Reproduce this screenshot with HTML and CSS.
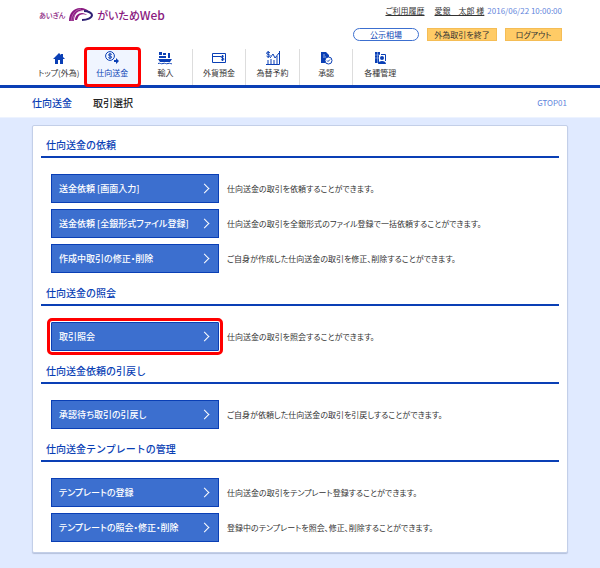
FILE: index.html
```html
<!doctype html>
<html lang="ja">
<head>
<title>仕向送金 取引選択 | あいぎん がいためWeb</title>
<meta charset="UTF-8">
<meta name="viewport" content="width=device-width, initial-scale=1.0">
<link rel="stylesheet" href="styles.css">
</head>
<body>
<header class="top">
<div class="logo">
<span class="bank">あいぎん</span>
<svg viewBox="0 0 24 14" width="24" height="14">
<path d="M0 13C0 5 5 0 11 0c5 0 8 2 9 4-3-2-6-2-9-1C7 4 5 8 5 13z" fill="#8a1a80"/>
<path d="M2 13C3 6 6 2 12 1M4 13C4 7 8 3 14 3" fill="none" stroke="#d9a3d3" stroke-width=".5"/>
<path d="M6 12c0-4 3-7 7-7 2 0 4 1 5 2-3-1-5-1-7 0-2 1-2 3-3 5z" fill="#8a1a80"/>
<path d="M15 3c4 0 8 2 8 4 0 3-5 5-10 5" fill="none" stroke="#2d1f73" stroke-width="2"/>
</svg>
<span class="service">がいため<span class="web">Web</span></span>
</div>
<div class="user">
<p class="info"><a href="#">ご利用履歴</a><a href="#">愛銀　太郎 様</a><time>2016/06/22 10:00:00</time></p>
<div class="actions">
<button type="button" class="rate">公示相場</button>
<button type="button" class="exit">外為取引を終了</button>
<button type="button" class="logout">ログアウト</button>
</div>
</div>
</header>

<nav>
<div class="menu">
<a href="#"><svg viewBox="0 0 14 14"><path d="M7 2L1 8h2v5h3V9h2v4h3V8h2l-2-2V3H9v1z" fill="#0a3fb5"/></svg>トップ(外為)</a>
<a href="#" class="current"><svg viewBox="0 0 14 14"><circle cx="5" cy="5" r="4.400" fill="none" stroke="#0a3fb5"/><path d="M6.800 3.500C6 2.600 3.500 2.700 3.500 4c0 1.400 3.200.7 3.200 2.100 0 1.300-2.500 1.400-3.400.4M5 2v6" fill="none" stroke="#0a3fb5"/><path d="M9 9h2V7l3 3-3 3v-2H9z" fill="#0a3fb5"/></svg>仕向送金</a>
<a href="#"><svg viewBox="0 0 14 14"><path d="M1 1h3v3H1zM5 2h3v2H5zM1 5h7v2H1zM10 2h2v5h-2zM0 8h14l-2 3H2z" fill="#0a3fb5"/><path d="M0 12.500c2-1 3 1 5 0s3 1 5 0 3 1 4 0" fill="none" stroke="#0a3fb5"/></svg>輸入</a>
<a href="#"><svg viewBox="0 0 14 14"><path d="M.5 2.500h13v9H.5zM1 5.500h8" fill="none" stroke="#0a3fb5"/><path d="M12 5.500c-1-1-3-.5-3 .5 0 1.500 3 .5 3 2s-2 1.500-3 .5M10.500 4v6" fill="none" stroke="#0a3fb5"/></svg>外貨預金</a>
<a href="#"><svg viewBox="0 0 14 14"><path d="M4 2C3 .5.500 1 .5 2.200.5 3.800 4 3 4 4.600 4 6 1.500 6.200.5 5M2.200 0v7M2 13.500V9M5 13.500V8M8 13.500V9M11 13.500V5M13.500 0v13.500H0M4 7l3-4 2 4 4-5" fill="none" stroke="#0a3fb5"/></svg>為替予約</a>
<a href="#"><svg viewBox="0 0 14 14"><path d="M2 1h5l3 3v3l-4 2v3H2z" fill="#0a3fb5"/><path d="M4 4h2M4 6h3" stroke="#fff" stroke-width=".6"/><circle cx="9.500" cy="9.500" r="3.500" fill="#fff" stroke="#0a3fb5"/><path d="M8 9.500l1 1 2-2" fill="none" stroke="#0a3fb5"/></svg>承認</a>
<a href="#"><svg viewBox="0 0 14 14"><path d="M2 1h5v11H2z" fill="#0a3fb5"/><path d="M2 4h5M2 7h5M4.500 1v11" stroke="#a9c2f2" stroke-width=".6"/><path d="M6 4h7v9H6z" fill="#fff"/><path d="M8 3.500h4.500V10" fill="none" stroke="#0a3fb5"/><circle cx="9" cy="7" r="2" fill="#0a3fb5"/><path d="M5 13c0-4 8-4 8 0z" fill="#0a3fb5"/></svg>各種管理</a>
</div>
</nav>

<div class="title">
<h1><span>仕向送金</span>取引選択</h1>
<span class="code">GTOP01</span>
</div>

<main>
<h2>仕向送金の依頼</h2>
<ul>
<li><button type="button">送金依頼 [画面入力]</button><p>仕向送金の取引を依頼することができます。</p></li>
<li><button type="button">送金依頼 [全銀形式ファイル登録]</button><p>仕向送金の取引を全銀形式のファイル登録で一括依頼することができます。</p></li>
<li><button type="button">作成中取引の修正・削除</button><p>ご自身が作成した仕向送金の取引を修正、削除することができます。</p></li>
</ul>
<h2>仕向送金の照会</h2>
<ul>
<li><button type="button" class="marked">取引照会</button><p>仕向送金の取引を照会することができます。</p></li>
</ul>
<h2>仕向送金依頼の引戻し</h2>
<ul>
<li><button type="button">承認待ち取引の引戻し</button><p>ご自身が依頼した仕向送金の取引を引戻しすることができます。</p></li>
</ul>
<h2>仕向送金テンプレートの管理</h2>
<ul>
<li><button type="button">テンプレートの登録</button><p>仕向送金の取引をテンプレート登録することができます。</p></li>
<li><button type="button">テンプレートの照会・修正・削除</button><p>登録中のテンプレートを照会、修正、削除することができます。</p></li>
</ul>
</main>
</body>
</html>
```
FILE: styles.css
```css
* {box-sizing: border-box;}
body {margin: 0; background: #e0eaff; color: #333; font-family: "Noto Sans CJK JP", sans-serif; font-size: 8px; line-height: 12px; font-feature-settings: "palt";}
h1, h2, p, ul {margin: 0; padding: 0;}
button {font-family: inherit; font-feature-settings: inherit; cursor: pointer;}
a {color: inherit;}

/* header */
.top {display: flex; justify-content: space-between; align-items: flex-start; height: 49px; padding: 5px 38px 0 39px; background: #fff;}
.logo {display: flex; align-items: center; gap: 4px; height: 20px; color: #8a1a80; font-weight: 500;}
.bank {font-size: 7px;}
.service {font-size: 11px;}
.web {font-size: 12px;}
.info {display: flex; justify-content: flex-end; gap: 10px;}
.info time {margin-left: -7px; color: #5f86dc;}
.actions {display: flex; gap: 8px; margin-top: 11px;}
.actions button {height: 13px; padding: 0; border: 1px solid #f5bd55; background: #ffcb66; color: #333; font-size: 8px; line-height: 11px;}
.actions .rate {width: 66px; border-color: #3c6fcf; border-radius: 7px; background: #fff; color: #0a3fb5;}
.actions .exit {width: 70px;}
.actions .logout {width: 57px;}

/* menu */
nav {padding: 0 32px; border-bottom: 3px solid #0a3fb5; background: #fff;}
.menu {display: grid; grid-template-columns: repeat(7, minmax(0, 1fr)); max-width: 375px; height: 36px;}
.menu a {display: flex; flex-direction: column; align-items: center; gap: 2px; padding-top: 2px; border-right: 1px solid #ddd; text-decoration: none; white-space: nowrap;}
.menu a:first-child, .menu a:last-child {border-right: 0;}
.menu svg {width: 14px; height: 14px; flex: none;}
.menu .current {border: 0; border-radius: 2px; background: #f0f5ff; color: #0a3fb5; outline: 3px solid #f00; outline-offset: -1px;}

/* page title */
.title {display: flex; justify-content: space-between; align-items: center; height: 30px; padding: 0 33px 0 32px; border-bottom: 1px solid #edf3ff; background: #fff;}
h1 {display: flex; gap: 21px; color: #222; font-size: 10px; font-weight: 500;}
h1 span {color: #0a3fb5;}
.code {color: #5f86dc;}

/* transactions */
main {margin: 7px 32px 15px; padding: 0 8px 10px; border: 1px solid #c3cfe8; border-radius: 2px; background: #fff; box-shadow: 0 1px 1px #b5c1dc;}
h2 {padding: 12px 5px 3px; border-bottom: 2px solid #0a3fb5; color: #0a3fb5; font-size: 10px; font-weight: 500; line-height: 16px; font-feature-settings: normal;}
h2:first-child {padding-top: 11px;}
ul {display: flex; flex-direction: column; gap: 6px; padding: 16px 10px 0; list-style: none;}
li {display: flex; align-items: center; gap: 8px;}
li button {display: flex; justify-content: space-between; align-items: center; flex: none; width: 168px; height: 29px; padding: 0 10px 0 7px; border: 1px solid #0a3fb5; background: #3c6fcf; color: #fff; font-size: 9px; font-weight: 500;}
li button::after {content: ""; width: 6px; height: 6px; border: solid #fff; border-width: 1px 1px 0 0; transform: rotate(45deg);}
.marked {outline: 3px solid #f00; outline-offset: 1px; border-radius: 1px;}
```
